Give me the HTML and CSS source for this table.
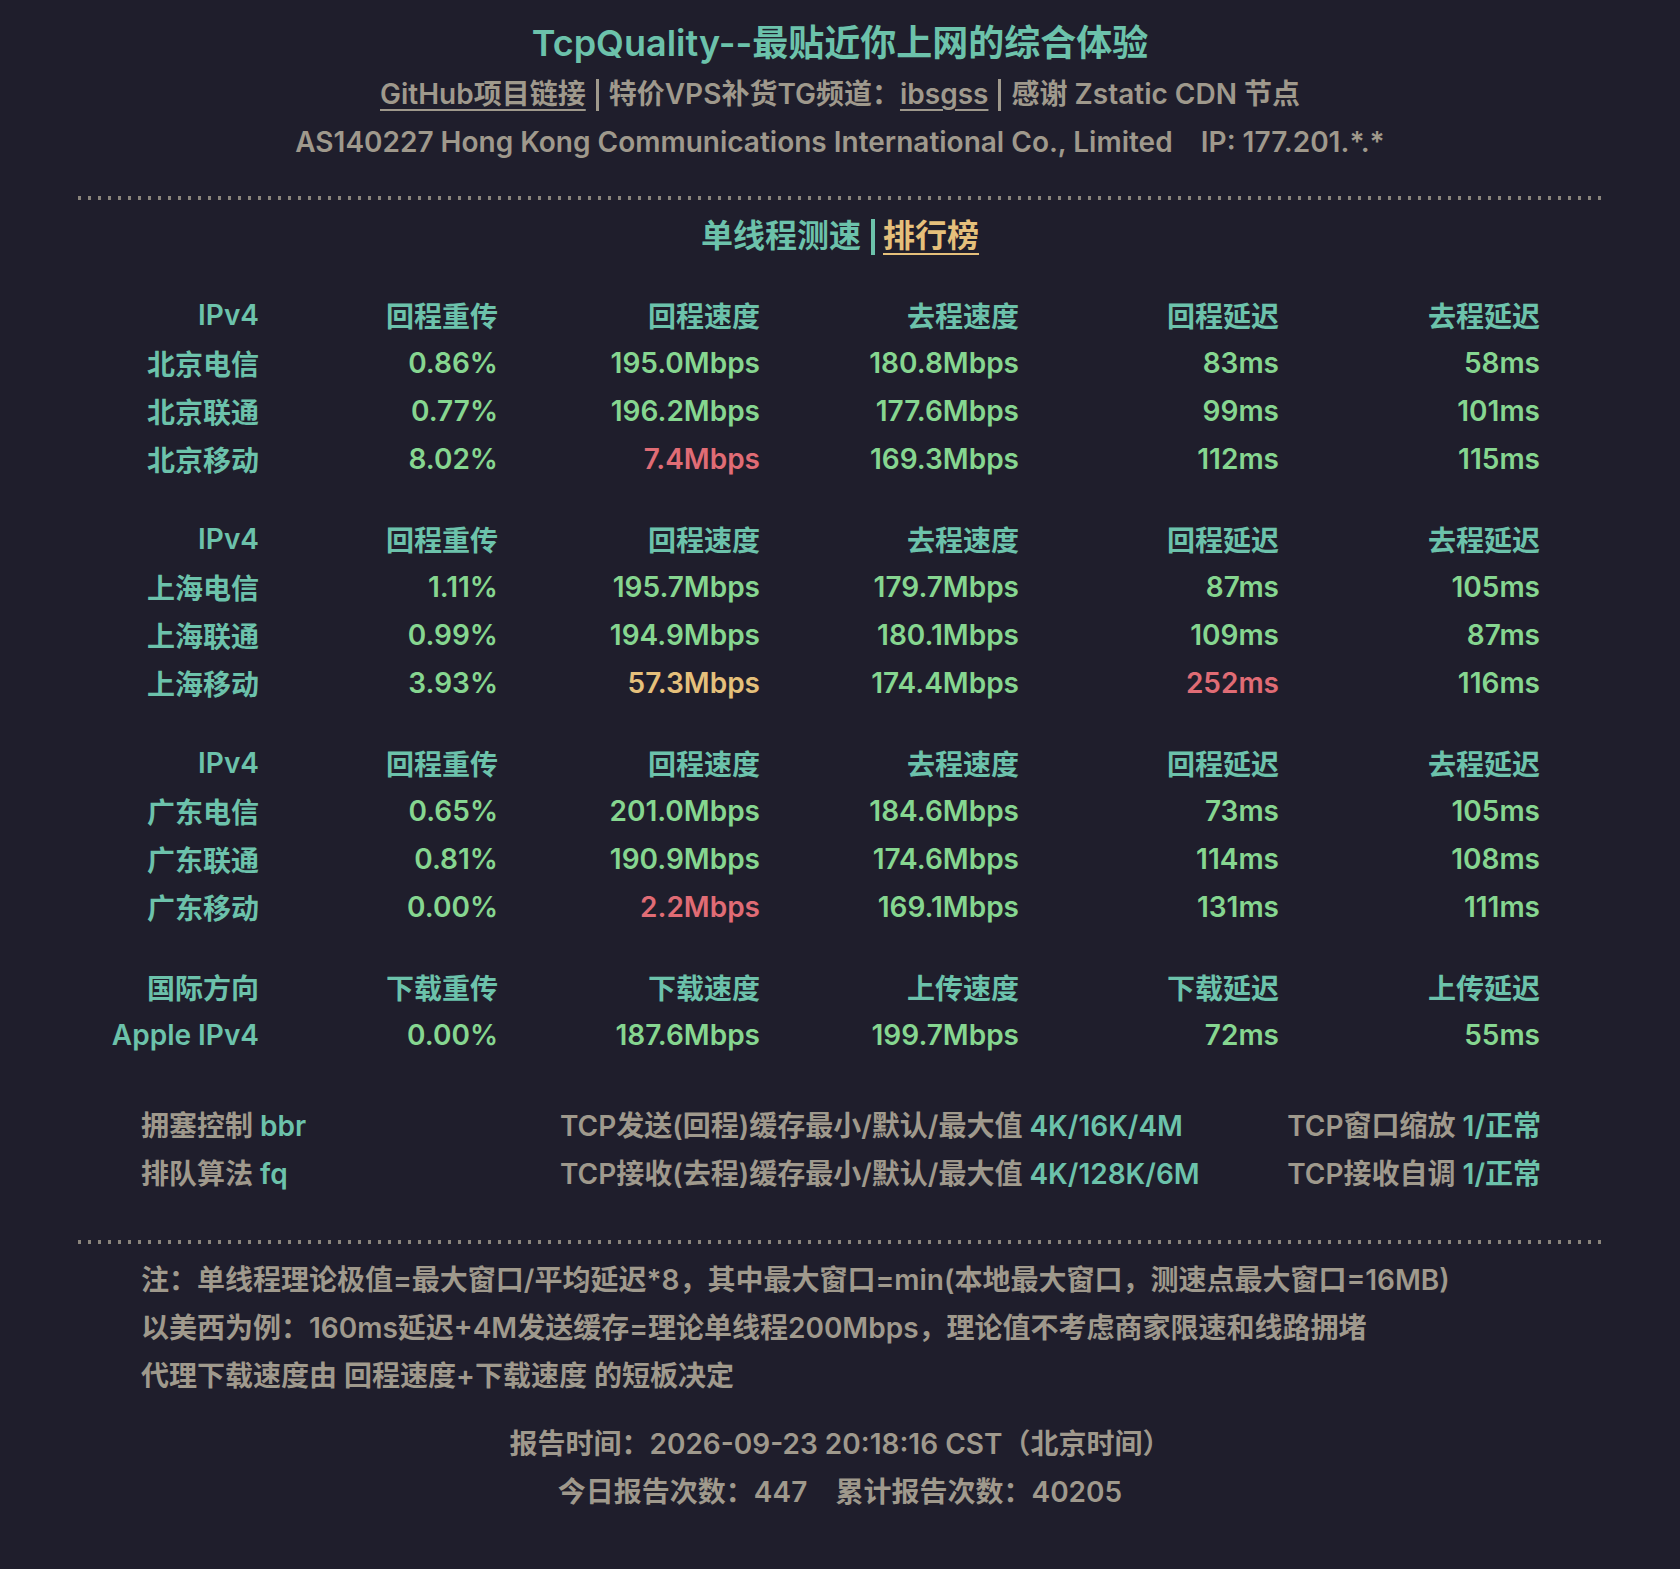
FILE: index.html
```html
<!DOCTYPE html>
<html lang="zh-CN">
<head>
<meta charset="utf-8">
<title>TcpQuality</title>
<link rel="stylesheet" href="styles.css">
</head>
<body>
<div class="page">
  <header class="head">
    <h1 class="title">TcpQuality--最贴近你上网的综合体验</h1>
    <p class="sub sub1"><a class="lnk" href="#">GitHub项目链接</a><span class="bar"></span>特价VPS补货TG频道：<a class="lnk" href="#">ibsgss</a><span class="bar"></span>感谢 Zstatic CDN 节点</p>
    <p class="sub">AS140227 Hong Kong Communications International Co., Limited&nbsp;&nbsp;&nbsp; IP: 177.201.*.*</p>
  </header>
  <div class="dots"></div>
  <div class="tabs"><span class="tab-a">单线程测速</span><span class="tbar"></span><a class="tab-b" href="#">排行榜</a></div>

  <div class="grid">
    <div class="h">IPv4</div><div class="h">回程重传</div><div class="h">回程速度</div><div class="h">去程速度</div><div class="h">回程延迟</div><div class="h">去程延迟</div>
    <div class="h">北京电信</div><div class="g">0.86%</div><div class="g">195.0Mbps</div><div class="g">180.8Mbps</div><div class="g">83ms</div><div class="g">58ms</div>
    <div class="h">北京联通</div><div class="g">0.77%</div><div class="g">196.2Mbps</div><div class="g">177.6Mbps</div><div class="g">99ms</div><div class="g">101ms</div>
    <div class="h">北京移动</div><div class="g">8.02%</div><div class="r">7.4Mbps</div><div class="g">169.3Mbps</div><div class="g">112ms</div><div class="g">115ms</div>
  </div>
  <div class="grid">
    <div class="h">IPv4</div><div class="h">回程重传</div><div class="h">回程速度</div><div class="h">去程速度</div><div class="h">回程延迟</div><div class="h">去程延迟</div>
    <div class="h">上海电信</div><div class="g">1.11%</div><div class="g">195.7Mbps</div><div class="g">179.7Mbps</div><div class="g">87ms</div><div class="g">105ms</div>
    <div class="h">上海联通</div><div class="g">0.99%</div><div class="g">194.9Mbps</div><div class="g">180.1Mbps</div><div class="g">109ms</div><div class="g">87ms</div>
    <div class="h">上海移动</div><div class="g">3.93%</div><div class="y">57.3Mbps</div><div class="g">174.4Mbps</div><div class="r">252ms</div><div class="g">116ms</div>
  </div>
  <div class="grid">
    <div class="h">IPv4</div><div class="h">回程重传</div><div class="h">回程速度</div><div class="h">去程速度</div><div class="h">回程延迟</div><div class="h">去程延迟</div>
    <div class="h">广东电信</div><div class="g">0.65%</div><div class="g">201.0Mbps</div><div class="g">184.6Mbps</div><div class="g">73ms</div><div class="g">105ms</div>
    <div class="h">广东联通</div><div class="g">0.81%</div><div class="g">190.9Mbps</div><div class="g">174.6Mbps</div><div class="g">114ms</div><div class="g">108ms</div>
    <div class="h">广东移动</div><div class="g">0.00%</div><div class="r">2.2Mbps</div><div class="g">169.1Mbps</div><div class="g">131ms</div><div class="g">111ms</div>
  </div>
  <div class="grid">
    <div class="h">国际方向</div><div class="h">下载重传</div><div class="h">下载速度</div><div class="h">上传速度</div><div class="h">下载延迟</div><div class="h">上传延迟</div>
    <div class="h">Apple IPv4</div><div class="g">0.00%</div><div class="g">187.6Mbps</div><div class="g">199.7Mbps</div><div class="g">72ms</div><div class="g">55ms</div>
  </div>

  <div class="sys">
    <div class="sc1">拥塞控制 <span class="v">bbr</span></div>
    <div class="sc2">TCP发送(回程)缓存最小/默认/最大值 <span class="v">4K/16K/4M</span></div>
    <div class="sc3">TCP窗口缩放 <span class="v">1/正常</span></div>
    <div class="sc1">排队算法 <span class="v">fq</span></div>
    <div class="sc2">TCP接收(去程)缓存最小/默认/最大值 <span class="v">4K/128K/6M</span></div>
    <div class="sc3">TCP接收自调 <span class="v">1/正常</span></div>
  </div>

  <div class="dots dots2"></div>
  <div class="notes">
    <p>注：单线程理论极值=最大窗口/平均延迟*8，其中最大窗口=min(本地最大窗口，测速点最大窗口=16MB)</p>
    <p>以美西为例：160ms延迟+4M发送缓存=理论单线程200Mbps，理论值不考虑商家限速和线路拥堵</p>
    <p>代理下载速度由 回程速度+下载速度 的短板决定</p>
  </div>
  <div class="foot">
    <p>报告时间：2026-09-23 20:18:16 CST（北京时间）</p>
    <p>今日报告次数：447&nbsp;&nbsp;&nbsp; 累计报告次数：40205</p>
  </div>
</div>
</body>
</html>
```
FILE: styles.css
```css
html, body {
  margin: 0;
  padding: 0;
  background: #1f1e2c;
}
body {
  font-family: Inter, "Noto Sans CJK SC", sans-serif;
  font-weight: 600;
  color: #9f998c;
  min-height: 1569px;
}
.page {
  width: 1524px;
  margin: 0 auto;
  padding-top: 20px;
}
.head {
  text-align: center;
}
.title {
  margin: 0;
  font-size: 36px;
  line-height: 46px;
  font-weight: 600;
  color: #6cc2ab;
}
.sub {
  margin: 0;
  font-size: 28px;
  line-height: 48px;
}
.sub1 {
  margin-top: 4px;
}
.lnk {
  color: #9f998c;
  text-decoration: underline;
  text-underline-offset: 5px;
  text-decoration-thickness: 2px;
}
.bar {
  display: inline-block;
  width: 3px;
  height: 32px;
  background: #9f998c;
  vertical-align: -7px;
  margin: 0 10px;
}
.dots {
  height: 4px;
  margin-top: 30px;
  background: repeating-linear-gradient(to right, #8a857c 0 3px, transparent 3px 10px);
}
.tabs {
  text-align: center;
  font-size: 32px;
  line-height: 48px;
  margin-top: 12px;
  margin-bottom: 31px;
  color: #6cc2ab;
}
.tbar {
  display: inline-block;
  width: 4px;
  height: 36px;
  background: #6cc2ab;
  vertical-align: -8px;
  margin: 0 8px 0 10px;
}
.tab-b {
  color: #e5c07b;
  text-decoration: underline;
  text-underline-offset: 6px;
  text-decoration-thickness: 2px;
}
.grid {
  display: grid;
  grid-template-columns: 181px 239px 262px 259px 260px 261px;
  grid-auto-rows: 48px;
  align-items: center;
  font-size: 28px;
  text-align: right;
  margin-bottom: 32px;
}
.h { color: #6cc2ab; }
.g { color: #86d690; }
.r { color: #e06c75; }
.y { color: #e5c07b; }
.sys {
  display: grid;
  grid-template-columns: 419px 681px 300px;
  grid-auto-rows: 48px;
  align-items: center;
  font-size: 28px;
  margin-top: 41px;
  padding-left: 63px;
  white-space: nowrap;
}
.sc3 { text-align: right; }
.v { color: #6cc2ab; }
.dots2 {
  margin-top: 44px;
}
.notes {
  padding-left: 63px;
  margin-top: 12px;
  font-size: 28px;
}
.notes p, .foot p {
  margin: 0;
  line-height: 48px;
}
.foot {
  text-align: center;
  margin-top: 20px;
  font-size: 28px;
}
```
